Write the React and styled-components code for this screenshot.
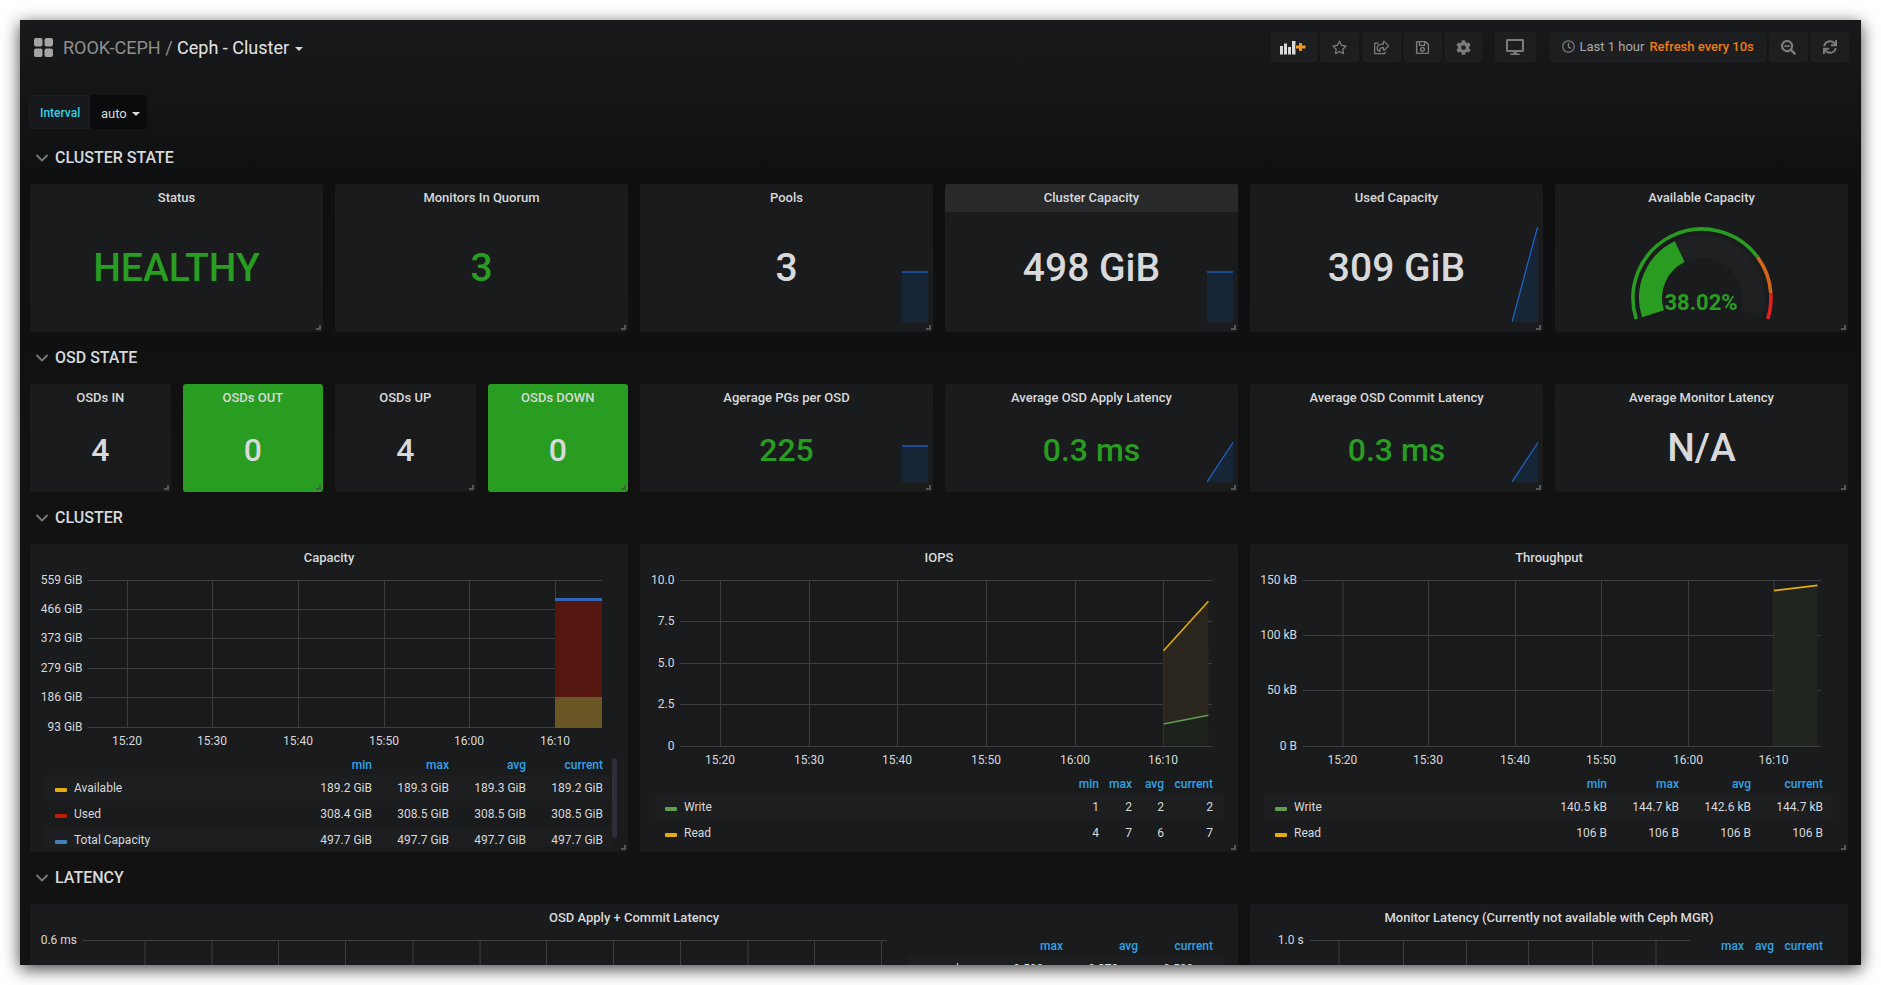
import styled, { createGlobalStyle } from "styled-components";
import { ChevronDown } from "lucide-react";
import {
  FaRegStar,
  FaRegShareSquare,
  FaRegSave,
  FaCog,
  FaDesktop,
  FaRegClock,
  FaSearchMinus,
  FaSync,
} from "react-icons/fa";

const GREEN = "#299c22";
const YELLOW = "#e5ac0e";
const LEGEND_GREEN = "#629e51";

const GlobalStyle = createGlobalStyle`
  html, body {
    margin: 0;
    background: #fff;
    font-family: Roboto, "Liberation Sans", sans-serif;
  }
`;

const Page = styled.div`
  padding: 20px;
  height: 985px;
  box-sizing: border-box;
  overflow: hidden;
`;

const Window = styled.div`
  width: 1841px;
  height: 945px;
  box-sizing: border-box;
  padding: 12px 13px 0 10px;
  overflow: hidden;
  color: #d8d9da;
  background: linear-gradient(#18191b 0, #0e0f11 170px, #121212 520px);
  box-shadow: 0 4px 16px rgba(0, 0, 0, 0.75);
`;

const Nav = styled.div`
  display: flex;
  align-items: center;
  height: 30px;
  margin-right: -1px;
`;

const Breadcrumb = styled.div`
  display: flex;
  align-items: center;
  gap: 10px;
  margin-left: 4px;
  font-size: 18px;
  color: #8e8e8e;
  flex: 1;
`;

const Current = styled.span`
  color: #e3e4e5;
`;

const Caret = styled.span`
  display: inline-block;
  margin-left: ${(p) => p.$left || 5}px;
  vertical-align: middle;
  border-top: 4px solid ${(p) => p.$color || "#d8d9da"};
  border-left: 4px solid transparent;
  border-right: 4px solid transparent;
`;

const NavButton = styled.div`
  display: flex;
  align-items: center;
  gap: 5px;
  box-sizing: border-box;
  width: ${(p) => p.$w}px;
  height: 30px;
  margin-left: ${(p) => p.$gap || 3.5}px;
  padding: ${(p) => (p.$pad ? "0 0 2px 11px" : "0")};
  justify-content: ${(p) => (p.$pad ? "flex-start" : "center")};
  background: #1d1e20;
  border: 1px solid #1f2022;
  border-radius: 3px;
  color: #7b7c7e;
  font-size: 13px;
`;

const TimeText = styled.span`
  color: #a9aaac;
`;

const RefreshText = styled.span`
  color: #eb7b18;
  font-weight: 500;
`;

const VarRow = styled.div`
  display: flex;
  height: 34px;
  margin: 33px 0 3px -1px;
  font-size: 12px;
`;

const VarLabel = styled.div`
  display: flex;
  align-items: center;
  box-sizing: border-box;
  width: 61px;
  padding: 1px 0 0 10px;
  background: #17181b;
  border: 1px solid #1b1c1f;
  border-radius: 3px 0 0 3px;
  color: #33d0e5;
  font-weight: 500;
`;

const VarValue = styled.div`
  display: flex;
  align-items: center;
  box-sizing: border-box;
  width: 57px;
  padding: 3px 0 0 11px;
  background: #0a0b0c;
  border-radius: 0 3px 3px 0;
  color: #d8d9da;
  font-size: 13px;
`;

const SectionTitle = styled.div`
  display: flex;
  align-items: center;
  gap: 3px;
  box-sizing: border-box;
  height: 52px;
  padding: 0 0 2px 2px;
  font-size: 16px;
  font-weight: 500;
  color: #d8d9da;
  svg {
    color: #77787a;
    margin-top: 2px;
  }
`;

const Grid = styled.div`
  display: grid;
  grid-template-columns: repeat(12, 1fr);
  grid-auto-rows: ${(p) => p.$h}px;
  gap: 12px;
`;

const Panel = styled.div`
  position: relative;
  grid-column: span ${(p) => p.$span};
  display: flex;
  flex-direction: column;
  min-width: 0;
  background: ${(p) => (p.$green ? GREEN : "#1a1b1d")};
  border-radius: 3px;
  &::after {
    content: "";
    position: absolute;
    right: 2px;
    bottom: 2px;
    width: 3px;
    height: 3px;
    border-right: 2px solid ${(p) => (p.$green ? "#4a5a48" : "#55565a")};
    border-bottom: 2px solid ${(p) => (p.$green ? "#4a5a48" : "#55565a")};
  }
`;

const PanelTitle = styled.div`
  flex: 0 0 28px;
  line-height: 28px;
  text-align: center;
  font-size: 13px;
  font-weight: 500;
  color: #d8d9da;
  background: ${(p) => (p.$hover ? "#28292b" : "transparent")};
  border-radius: 3px 3px 0 0;
  white-space: nowrap;
`;

const StatValue = styled.div`
  flex: 1;
  display: flex;
  align-items: center;
  justify-content: center;
  padding-bottom: ${(p) => p.$bottom}px;
  font-size: ${(p) => p.$size}px;
  font-weight: 500;
  color: ${(p) => (p.$good ? GREEN : "#d8d9da")};
`;

const Spark = styled.svg`
  position: absolute;
  right: 5.5px;
  bottom: ${(p) => p.$bottom}px;
  width: 26px;
  height: ${(p) => p.$h}px;
`;

const GaugeWrap = styled.div`
  flex: 1;
  display: flex;
  justify-content: center;
`;

const GaugeText = styled.text`
  font-size: 22px;
  font-weight: 700;
  fill: ${GREEN};
  text-anchor: middle;
  dominant-baseline: central;
`;

const ChartSvg = styled.svg`
  display: block;
  flex: none;
  text {
    font-family: Roboto, "Liberation Sans", sans-serif;
    font-size: 12px;
    fill: #d8d9da;
  }
`;

const PanelBody = styled.div`
  display: flex;
  flex-direction: ${(p) => (p.$row ? "row" : "column")};
  min-height: 0;
`;

const Legend = styled.div`
  position: relative;
  flex: ${(p) => (p.$side ? 1 : "none")};
  margin: ${(p) => (p.$side ? "6px 15px 0 0" : "0 15px")};
  max-height: ${(p) => (p.$scroll ? "90px" : "none")};
  ${(p) => p.$scroll && "margin-right: 11px; padding-right: 6px;"}
  overflow: hidden;
  font-size: 12px;
`;

const LegendRow = styled.div`
  display: flex;
  align-items: center;
  height: 26px;
  padding: 0 ${(p) => p.$pad}px 0 10px;
  &:nth-child(even) {
    background: #1d1e20;
  }
`;

const LegendHead = styled(LegendRow)`
  box-sizing: border-box;
  height: 18px;
  padding-bottom: 2px;
  color: #33a2e5;
  font-weight: 500;
  justify-content: flex-end;
`;

const Swatch = styled.span`
  flex: none;
  width: 12px;
  height: 4px;
  margin: 4px 7px 0 0;
  background: ${(p) => p.$color};
  border-radius: 1px;
`;

const SeriesName = styled.span`
  flex: 1;
  color: #d8d9da;
`;

const Cell = styled.span`
  flex: none;
  width: ${(p) => p.$w}px;
  text-align: right;
  white-space: nowrap;
  color: #d8d9da;
`;

const HeadCell = styled(Cell)`
  color: #33a2e5;
`;

const ScrollThumb = styled.div`
  position: absolute;
  right: 0;
  top: 1px;
  width: 5px;
  height: 80px;
  background: #2c2f38;
  border-radius: 3px;
`;

const polar = (r, deg) => {
  const a = ((deg - 90) * Math.PI) / 180;
  return [80 + r * Math.cos(a), 86 + r * Math.sin(a)];
};

const arc = (r, from, to) => {
  const [x1, y1] = polar(r, from);
  const [x2, y2] = polar(r, to);
  return `M${x1} ${y1} A${r} ${r} 0 ${to - from > 180 ? 1 : 0} 1 ${x2} ${y2}`;
};

const GridIcon = () => (
  <svg width="19" height="19" viewBox="0 0 19 19" fill="#a3a4a6">
    <rect x="0" y="0" width="8.5" height="8.5" rx="2" />
    <rect x="10.5" y="0" width="8.5" height="8.5" rx="2" />
    <rect x="0" y="10.5" width="8.5" height="8.5" rx="2" />
    <rect x="10.5" y="10.5" width="8.5" height="8.5" rx="2" />
  </svg>
);

const AddPanelIcon = () => (
  <svg width="27" height="15" viewBox="0 0 27 15">
    <g fill="#d8d9da">
      <rect x="0" y="6" width="3" height="8.5" />
      <rect x="4" y="3.5" width="3" height="11" />
      <rect x="8" y="7" width="3" height="7.5" />
      <rect x="12" y="1" width="3.5" height="13.5" />
    </g>
    <path d="M20.5 3v8M15.5 7h11" stroke="#1d1e20" strokeWidth="5" />
    <path d="M20.5 3v8M16 7h9.5" stroke="#f29c1f" strokeWidth="2.8" />
  </svg>
);

const Sparkline = ({ kind, h, bottom }) => {
  const fillPts = kind === "flat" ? `0,1 26,1 26,${h} 0,${h}` : `0,${h} 25,2 26,0 26,${h}`;
  const linePts = kind === "flat" ? "0,1 26,1" : `0,${h} 25,2 26,0`;
  return (
    <Spark $h={h} $bottom={bottom} viewBox={`0 0 26 ${h}`}>
      <polygon points={fillPts} fill="#172636" />
      <polyline points={linePts} fill="none" stroke="#1f60c4" strokeWidth="1.3" />
    </Spark>
  );
};

const Gauge = () => (
  <GaugeWrap>
    <svg width="160" height="115" viewBox="0 0 160 115">
      <path d={arc(51.5, -107.7, 107.7)} fill="none" stroke="#1f2022" strokeWidth="23" />
      <path d={arc(51.5, -107.7, -25.7)} fill="none" stroke={GREEN} strokeWidth="23" />
      <path d={arc(69, -107.7, 53.8)} fill="none" stroke={GREEN} strokeWidth="3.6" />
      <path d={arc(69, 53.8, 86)} fill="none" stroke="#d4661b" strokeWidth="3.6" />
      <path d={arc(69, 86, 107.7)} fill="none" stroke="#e02020" strokeWidth="3.6" />
      <GaugeText x="79" y="90">38.02%</GaugeText>
    </svg>
  </GaugeWrap>
);

const Chart = ({ w, h, left, right, labelRight, yTicks, xTicks, labelY, children }) => (
  <ChartSvg width={w} height={h} viewBox={`0 0 ${w} ${h}`}>
    {yTicks.map(([y, label]) => (
      <g key={label}>
        <line x1={left} x2={right} y1={y + 0.5} y2={y + 0.5} stroke="#3d3e40" />
        <text x={labelRight} y={y + 4} textAnchor="end">
          {label}
        </text>
      </g>
    ))}
    {xTicks.map(([x, label], i) => (
      <g key={i}>
        <line
          x1={x + 0.5}
          x2={x + 0.5}
          y1={yTicks[0][0]}
          y2={yTicks[yTicks.length - 1][0] + (labelY ? 0 : 300)}
          stroke="#3d3e40"
        />
        {labelY && label && (
          <text x={x} y={labelY} textAnchor="middle">
            {label}
          </text>
        )}
      </g>
    ))}
    {children}
  </ChartSvg>
);

const timeTicks = (xs) => {
  const names = ["15:20", "15:30", "15:40", "15:50", "16:00", "16:10"];
  return xs.map((x, i) => [x, names[i]]);
};

const SeriesLegend = ({ rows, heads, widths, pad = 10, ...rest }) => (
  <Legend {...rest}>
    <LegendHead as="div" $pad={pad}>
      {heads.map((name, i) => (
        <HeadCell key={name} $w={widths[i]}>
          {name}
        </HeadCell>
      ))}
    </LegendHead>
    {rows.map((row) => (
      <LegendRow key={row.name} $pad={pad}>
        <Swatch $color={row.color} />
        <SeriesName>{row.name}</SeriesName>
        {row.values.map((v, i) => (
          <Cell key={i} $w={widths[i]}>
            {v}
          </Cell>
        ))}
      </LegendRow>
    ))}
    {rest.$scroll && <ScrollThumb />}
  </Legend>
);

const HEADS = ["min", "max", "avg", "current"];

const statsTop = [
  { title: "Status", value: "HEALTHY", good: true },
  { title: "Monitors In Quorum", value: "3", good: true },
  { title: "Pools", value: "3", spark: "flat", sh: 51 },
  { title: "Cluster Capacity", value: "498 GiB", spark: "flat", sh: 51, hover: true },
  { title: "Used Capacity", value: "309 GiB", spark: "rise", sh: 95 },
];

const statsOsd = [
  { title: "OSDs IN", value: "4", span: 1 },
  { title: "OSDs OUT", value: "0", span: 1, green: true },
  { title: "OSDs UP", value: "4", span: 1 },
  { title: "OSDs DOWN", value: "0", span: 1, green: true },
  { title: "Agerage PGs per OSD", value: "225", good: true, spark: "flat", sh: 37 },
  { title: "Average OSD Apply Latency", value: "0.3 ms", good: true, spark: "rise", sh: 40 },
  { title: "Average OSD Commit Latency", value: "0.3 ms", good: true, spark: "rise", sh: 40 },
];

const App = () => (
  <Page>
    <GlobalStyle />
    <Window>
      <Nav>
        <Breadcrumb>
          <GridIcon />
          <span>
            ROOK-CEPH / <Current>Ceph - Cluster</Current>
            <Caret $left={6} />
          </span>
        </Breadcrumb>
        <NavButton $w={45.5}>
          <AddPanelIcon />
        </NavButton>
        <NavButton $w={39}>
          <FaRegStar size={15} />
        </NavButton>
        <NavButton $w={38}>
          <FaRegShareSquare size={15} />
        </NavButton>
        <NavButton $w={37.5}>
          <FaRegSave size={15} />
        </NavButton>
        <NavButton $w={37}>
          <FaCog size={15} />
        </NavButton>
        <NavButton $w={41.5} $gap={12.5}>
          <FaDesktop size={18} />
        </NavButton>
        <NavButton $w={216.5} $gap={13.5} $pad>
          <FaRegClock size={13} />
          <TimeText>Last 1 hour</TimeText>
          <RefreshText>Refresh every 10s</RefreshText>
        </NavButton>
        <NavButton $w={39} $gap={3}>
          <FaSearchMinus size={15} />
        </NavButton>
        <NavButton $w={38} $gap={3}>
          <FaSync size={14} />
        </NavButton>
      </Nav>

      <VarRow>
        <VarLabel>Interval</VarLabel>
        <VarValue>
          auto
          <Caret $left={5} />
        </VarValue>
      </VarRow>

      <SectionTitle>
        <ChevronDown size={20} strokeWidth={2.2} />
        CLUSTER STATE
      </SectionTitle>
      <Grid $h={148}>
        {statsTop.map((s) => (
          <Panel key={s.title} $span={2}>
            <PanelTitle $hover={s.hover}>{s.title}</PanelTitle>
            <StatValue $size={39} $bottom={8} $good={s.good}>
              {s.value}
            </StatValue>
            {s.spark && <Sparkline kind={s.spark} h={s.sh} bottom={10} />}
          </Panel>
        ))}
        <Panel $span={2}>
          <PanelTitle>Available Capacity</PanelTitle>
          <Gauge />
        </Panel>
      </Grid>

      <SectionTitle>
        <ChevronDown size={20} strokeWidth={2.2} />
        OSD STATE
      </SectionTitle>
      <Grid $h={108}>
        {statsOsd.map((s) => (
          <Panel key={s.title} $span={s.span || 2} $green={s.green}>
            <PanelTitle>{s.title}</PanelTitle>
            <StatValue $size={32} $bottom={4} $good={s.good}>
              {s.value}
            </StatValue>
            {s.spark && <Sparkline kind={s.spark} h={s.sh} bottom={10} />}
          </Panel>
        ))}
        <Panel $span={2}>
          <PanelTitle>Average Monitor Latency</PanelTitle>
          <StatValue $size={39} $bottom={9}>
            N/A
          </StatValue>
        </Panel>
      </Grid>

      <SectionTitle>
        <ChevronDown size={20} strokeWidth={2.2} />
        CLUSTER
      </SectionTitle>
      <Grid $h={308}>
        <Panel $span={4}>
          <PanelTitle>Capacity</PanelTitle>
          <PanelBody>
            <Chart
              w={598}
              h={185}
              left={58}
              right={572}
              labelRight={52.5}
              labelY={173}
              yTicks={[
                [8, "559 GiB"],
                [37, "466 GiB"],
                [66, "373 GiB"],
                [96, "279 GiB"],
                [125, "186 GiB"],
                [155, "93 GiB"],
              ]}
              xTicks={timeTicks([97, 182, 268, 354, 439, 525])}
            >
              <rect x="525" y="26" width="47" height="3" fill="#2f66b5" />
              <rect x="525" y="29" width="47" height="96" fill="#55170f" />
              <rect x="525" y="125" width="47" height="31" fill="#685624" />
            </Chart>
            <SeriesLegend
              $scroll
              pad={8}
              heads={HEADS}
              widths={[77, 77, 77, 77]}
              rows={[
                { name: "Available", color: YELLOW, values: ["189.2 GiB", "189.3 GiB", "189.3 GiB", "189.2 GiB"] },
                { name: "Used", color: "#bf1b00", values: ["308.4 GiB", "308.5 GiB", "308.5 GiB", "308.5 GiB"] },
                { name: "Total Capacity", color: "#447ebc", values: ["497.7 GiB", "497.7 GiB", "497.7 GiB", "497.7 GiB"] },
              ]}
            />
          </PanelBody>
        </Panel>
        <Panel $span={4}>
          <PanelTitle>IOPS</PanelTitle>
          <PanelBody>
            <Chart
              w={598}
              h={204}
              left={40}
              right={572}
              labelRight={34.5}
              labelY={192}
              yTicks={[
                [8, "10.0"],
                [49, "7.5"],
                [91, "5.0"],
                [132, "2.5"],
                [174, "0"],
              ]}
              xTicks={timeTicks([80, 169, 257, 346, 435, 523])}
            >
              <polygon points="523.5,78.7 568.4,29.3 568.4,143.3 523.5,152" fill="#2a261e" />
              <polygon points="523.5,152 568.4,143.3 568.4,174 523.5,174" fill="#1d221d" />
              <line x1="523.5" y1="78.7" x2="568.4" y2="29.3" stroke={YELLOW} strokeWidth="1.6" />
              <line x1="523.5" y1="152" x2="568.4" y2="143.3" stroke={LEGEND_GREEN} strokeWidth="1.6" />
            </Chart>
            <SeriesLegend
              heads={HEADS}
              widths={[34, 33, 32, 49]}
              rows={[
                { name: "Write", color: LEGEND_GREEN, values: ["1", "2", "2", "2"] },
                { name: "Read", color: YELLOW, values: ["4", "7", "6", "7"] },
              ]}
            />
          </PanelBody>
        </Panel>
        <Panel $span={4}>
          <PanelTitle>Throughput</PanelTitle>
          <PanelBody>
            <Chart
              w={598}
              h={204}
              left={53}
              right={571}
              labelRight={47}
              labelY={192}
              yTicks={[
                [8, "150 kB"],
                [63, "100 kB"],
                [118, "50 kB"],
                [174, "0 B"],
              ]}
              xTicks={timeTicks([92.4, 178, 265, 351, 438, 523.5])}
            >
              <polygon points="524,18.7 567.5,13.3 567.5,174 524,174" fill="#21251f" />
              <line x1="524" y1="18.7" x2="567.5" y2="13.3" stroke={YELLOW} strokeWidth="1.8" />
            </Chart>
            <SeriesLegend
              heads={HEADS}
              widths={[72, 72, 72, 72]}
              rows={[
                { name: "Write", color: LEGEND_GREEN, values: ["140.5 kB", "144.7 kB", "142.6 kB", "144.7 kB"] },
                { name: "Read", color: YELLOW, values: ["106 B", "106 B", "106 B", "106 B"] },
              ]}
            />
          </PanelBody>
        </Panel>
      </Grid>

      <SectionTitle>
        <ChevronDown size={20} strokeWidth={2.2} />
        LATENCY
      </SectionTitle>
      <Grid $h={300}>
        <Panel $span={8}>
          <PanelTitle>OSD Apply + Commit Latency</PanelTitle>
          <PanelBody $row>
            <Chart
              w={877}
              h={200}
              left={53}
              right={857}
              labelRight={47}
              yTicks={[[8, "0.6 ms"]]}
              xTicks={[114.5, 181.6, 248, 315, 382.5, 449.6, 516, 583, 650, 717.6, 784, 851].map((x) => [x])}
            />
            <SeriesLegend
              $side
              heads={["max", "avg", "current"]}
              widths={[75, 75, 75]}
              rows={[{ name: "apply", color: LEGEND_GREEN, values: ["0.500 ms", "0.370 ms", "0.500 ms"] }]}
            />
          </PanelBody>
        </Panel>
        <Panel $span={4}>
          <PanelTitle>Monitor Latency (Currently not available with Ceph MGR)</PanelTitle>
          <PanelBody $row>
            <Chart
              w={450}
              h={200}
              left={60}
              right={440}
              labelRight={53.7}
              yTicks={[[8, "1.0 s"]]}
              xTicks={[88.6, 153, 216, 278, 342, 405.5].map((x) => [x])}
            />
            <SeriesLegend $side heads={["max", "avg", "current"]} widths={[30, 30, 49]} rows={[]} />
          </PanelBody>
        </Panel>
      </Grid>
    </Window>
  </Page>
);

export default App;
